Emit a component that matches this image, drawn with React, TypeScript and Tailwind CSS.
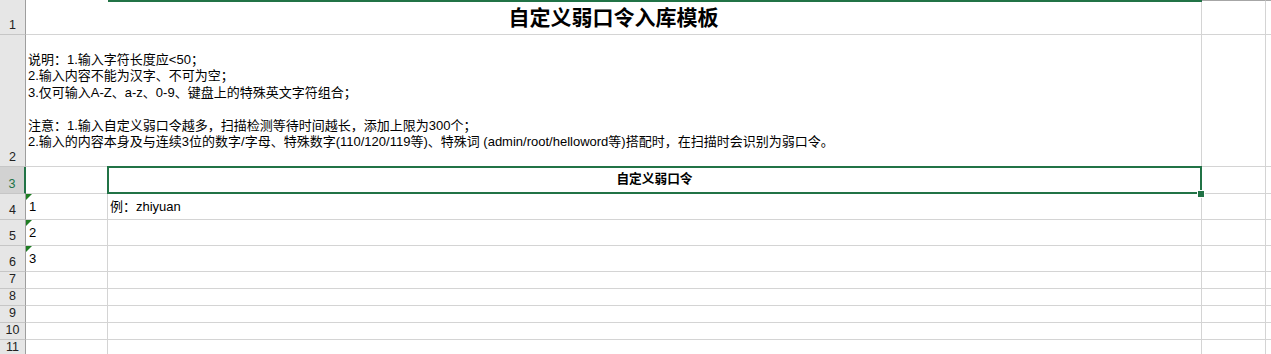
import type { ReactNode } from 'react'

const GRID = 'border-[#d4d4d4]'
const GREEN = '#217346'

// 行号单元格
const RowHead = ({ n, active }: { n?: number; active?: boolean }) => (
  <div
    className={
      active
        ? 'flex w-[26px] shrink-0 items-end justify-center border-b border-r-2 border-b-[#c6c6c6] border-r-[#217346] bg-[#d2d2d2] pb-[2px] text-[12.5px] leading-[14px] text-[#217346]'
        : 'flex w-[26px] shrink-0 items-end justify-center border-b border-r border-b-[#c6c6c6] border-r-[#9e9e9e] bg-[#e6e6e6] pb-[2px] text-[12.5px] leading-[14px] text-[#222]'
    }
  >
    {n}
  </div>
)

// 文本格式数字的错误标记（左上角绿色三角）
const ErrorMark = () => (
  <span className="absolute left-0 top-0 h-0 w-0 border-r-[6px] border-t-[6px] border-r-transparent border-t-[#1e7d22]" />
)

const Row = ({ h, n, active, a, b, mark }: {
  h: string
  n: number
  active?: boolean
  a?: ReactNode
  b?: ReactNode
  mark?: boolean
}) => (
  <div className={`flex ${h}`}>
    <RowHead n={n} active={active} />
    <div className={`relative flex w-[82px] shrink-0 items-center border-b border-r ${GRID} pl-[3px]`}>
      {mark && <ErrorMark />}
      {a}
    </div>
    <div className={`flex w-[1094px] shrink-0 items-center border-b border-r ${GRID} pl-[2px]`}>{b}</div>
    <div className={`w-[64px] shrink-0 border-b border-r ${GRID}`} />
    <div className={`flex-1 border-b ${GRID}`} />
  </div>
)

const notes = [
  '',
  '说明：1.输入字符长度应<50；',
  '2.输入内容不能为汉字、不可为空；',
  '3.仅可输入A-Z、a-z、0-9、键盘上的特殊英文字符组合；',
  '',
  '注意：1.输入自定义弱口令越多，扫描检测等待时间越长，添加上限为300个；',
  '2.输入的内容本身及与连续3位的数字/字母、特殊数字(110/120/119等)、特殊词 (admin/root/helloword等)搭配时，在扫描时会识别为弱口令。',
  '',
]

export default function App() {
  return (
    <div className="h-[354px] w-full overflow-hidden bg-white font-['Liberation_Sans','Noto_Sans_CJK_SC',sans-serif] text-[13px] text-black">
      {/* 列头下沿：选中列的绿色指示 */}
      <div className="flex h-[2px]">
        <div className="w-[26px] shrink-0 border-r border-[#9e9e9e] bg-[#e6e6e6]" />
        <div className="w-[82px] shrink-0" />
        <div className="w-[1094px] shrink-0 bg-[#217346]" />
        <div className={`w-[64px] shrink-0 border-r border-t border-r-[#d4d4d4] border-t-[#a6a6a6]`} />
        <div className="flex-1 border-t border-[#a6a6a6]" />
      </div>

      {/* 1：标题（A1:B1 合并） */}
      <div className="flex h-[33px]">
        <RowHead n={1} />
        <div className={`flex w-[1176px] shrink-0 items-center justify-center border-b border-r ${GRID} text-[21px] font-bold`}>
          自定义弱口令入库模板
        </div>
        <div className={`w-[64px] shrink-0 border-b border-r ${GRID}`} />
        <div className={`flex-1 border-b ${GRID}`} />
      </div>

      {/* 2：说明（A2:B2 合并） */}
      <div className="flex h-[132px]">
        <RowHead n={2} />
        <div className={`w-[1176px] shrink-0 border-b border-r ${GRID} pl-[2px] leading-[16.5px]`}>
          {notes.map((line, i) => (
            <div key={i} className="h-[16.5px] whitespace-pre">{line}</div>
          ))}
        </div>
        <div className={`w-[64px] shrink-0 border-b border-r ${GRID}`} />
        <div className={`flex-1 border-b ${GRID}`} />
      </div>

      {/* 3：表头，当前选中 B3 */}
      <div className="flex h-[27px]">
        <RowHead n={3} active />
        <div className={`w-[82px] shrink-0 border-b border-r ${GRID}`} />
        <div className={`relative flex w-[1094px] shrink-0 items-center justify-center border-b border-r ${GRID} text-[12.7px] font-bold`}>
          自定义弱口令
          <span className="absolute left-[-1px] top-[-1px] h-[28px] w-[1095px] border-2 border-[#217346]" />
          <span
            className="absolute left-[1089px] top-[23px] h-[8px] w-[8px] border border-white"
            style={{ backgroundColor: GREEN }}
          />
        </div>
        <div className={`w-[64px] shrink-0 border-b border-r ${GRID}`} />
        <div className={`flex-1 border-b ${GRID}`} />
      </div>

      <Row h="h-[26px]" n={4} a="1" b="例：zhiyuan" mark />
      <Row h="h-[26px]" n={5} a="2" mark />
      <Row h="h-[26px]" n={6} a="3" mark />
      {[7, 8, 9, 10, 11].map((n) => (
        <Row key={n} h="h-[17px]" n={n} />
      ))}
    </div>
  )
}
